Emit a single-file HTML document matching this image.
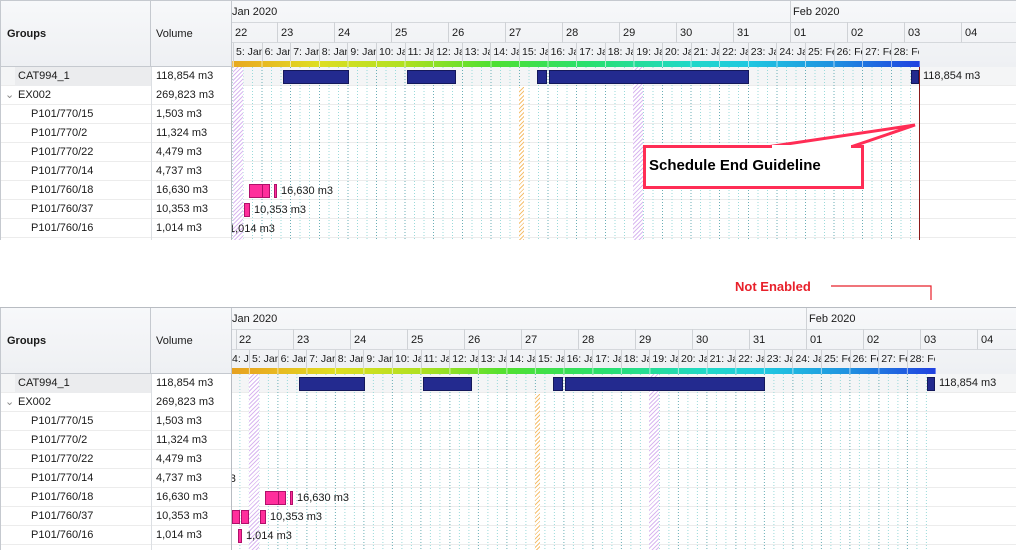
<!DOCTYPE html>
<html><head><meta charset="utf-8"><style>
*{margin:0;padding:0;box-sizing:border-box}
html,body{width:1016px;height:550px;overflow:hidden}
body{background:#fff;position:relative;font-family:"Liberation Sans",sans-serif;font-size:11px;color:#1a1a1a}
.panel{position:absolute;left:0;width:1016px;overflow:hidden}
.a{position:absolute;white-space:nowrap}
.hdr{background:linear-gradient(#f7f8fa,#eef0f3)}
.lt{border-right:1px solid #c5c9cf}
.row{position:absolute;left:0;width:1016px;height:19px;border-bottom:1px solid #ececec}
.chart{position:absolute;left:232px;width:784px;overflow:hidden}
.inner{position:absolute;left:0;top:0;width:800px;height:100%}
.day{position:absolute;top:21px;height:21px;border-left:1px solid #cfd2d6;border-bottom:1px solid #d5d8dc;padding:5px 0 0 3px;font-size:11px;overflow:hidden;white-space:nowrap}
.sub{position:absolute;top:42px;height:18px;width:28.6px;border-left:1px solid #cfd2d6;padding:3px 0 0 2px;overflow:hidden;white-space:nowrap;font-size:10.5px}
.lines{position:absolute;top:66px;left:0;height:200px;
background-image:repeating-linear-gradient(to right,#6aaeb6 0 1px,transparent 1px 28.6px),repeating-linear-gradient(to right,transparent 0 9.5px,#9adada 9.5px 10.5px,transparent 10.5px 19px,#9adada 19px 20px,transparent 20px 28.6px);background-position:1px 0,1px 0;
-webkit-mask-image:repeating-linear-gradient(to bottom,#000 0 1px,transparent 1px 3px);mask-image:repeating-linear-gradient(to bottom,#000 0 1px,transparent 1px 3px)}
.hatchp{position:absolute;top:66px;height:200px;background:repeating-linear-gradient(135deg,#d9b8f0 0 1px,#fff 1px 3px)}
.hatcho{position:absolute;top:86px;height:200px;background:repeating-linear-gradient(135deg,#f5c070 0 1px,#fff 1px 3px)}
.bar{position:absolute;background:#232a8f;border:1px solid #14185a;height:14px}
.pk{position:absolute;background:#ff2e9c;border:1px solid #b0106a;height:14px}
.lbl{position:absolute;white-space:nowrap}
</style></head><body>

<!-- TOP PANEL -->
<div class="panel" style="top:0;height:240px;border-top:1px solid #c5c9cf">
  <div class="a hdr lt" style="left:0;top:0;width:151px;height:66px;border-bottom:1px solid #c5c9cf;border-left:1px solid #c5c9cf"></div>
  <div class="a" style="left:7px;top:27px;font-weight:bold">Groups</div>
  <div class="a hdr lt" style="left:151px;top:0;width:81px;height:66px;border-bottom:1px solid #c5c9cf"></div>
  <div class="a" style="left:156px;top:27px">Volume</div>
  <div class="a hdr" style="left:232px;top:0;width:784px;height:66px"></div>
  <div class="a" style="left:232px;top:21px;width:784px;border-top:1px solid #d5d8dc"></div>

  <div class="row" style="top:66px;background:#f4f5f6"></div>
  <div class="a" style="left:15px;top:66px;width:136px;height:19px;background:#ebecee"></div>
  <div class="a" style="left:151px;top:66px;width:81px;height:19px;background:#fff"></div>
  <div class="row" style="top:85px"></div><div class="row" style="top:104px"></div><div class="row" style="top:123px"></div><div class="row" style="top:142px"></div><div class="row" style="top:161px"></div><div class="row" style="top:180px"></div><div class="row" style="top:199px"></div><div class="row" style="top:218px"></div>
  <div class="a" style="left:0;top:66px;width:1px;height:180px;background:#c5c9cf"></div>
  <div class="a" style="left:151px;top:66px;width:1px;height:180px;background:#dcdfe3"></div>
  <div class="a" style="left:231px;top:66px;width:1px;height:180px;background:#b8bcc2"></div>

  <div class="a" style="left:18px;top:69px">CAT994_1</div><div class="a" style="left:156px;top:69px">118,854 m3</div>
  <div class="a" style="left:5px;top:87px;color:#888">&#8964;</div>
  <div class="a" style="left:18px;top:88px">EX002</div><div class="a" style="left:156px;top:88px">269,823 m3</div>
  <div class="a" style="left:31px;top:107px">P101/770/15</div><div class="a" style="left:156px;top:107px">1,503 m3</div>
  <div class="a" style="left:31px;top:126px">P101/770/2</div><div class="a" style="left:156px;top:126px">11,324 m3</div>
  <div class="a" style="left:31px;top:145px">P101/770/22</div><div class="a" style="left:156px;top:145px">4,479 m3</div>
  <div class="a" style="left:31px;top:164px">P101/770/14</div><div class="a" style="left:156px;top:164px">4,737 m3</div>
  <div class="a" style="left:31px;top:183px">P101/760/18</div><div class="a" style="left:156px;top:183px">16,630 m3</div>
  <div class="a" style="left:31px;top:202px">P101/760/37</div><div class="a" style="left:156px;top:202px">10,353 m3</div>
  <div class="a" style="left:31px;top:221px">P101/760/16</div><div class="a" style="left:156px;top:221px">1,014 m3</div>

  <div class="chart" style="top:0;height:240px">
    <div class="a" style="left:0;top:5px">Jan 2020</div>
    <div class="a" style="left:558px;top:0;height:21px;border-left:1px solid #cfd2d6;padding:5px 0 0 2px">Feb 2020</div>
    <div class="inner">
      <div class="day" style="left:-12px;width:57px;padding-left:14px">22</div>
      <div class="day" style="left:45px;width:57px">23</div><div class="day" style="left:102px;width:57px">24</div><div class="day" style="left:159px;width:57px">25</div><div class="day" style="left:216px;width:57px">26</div><div class="day" style="left:273px;width:57px">27</div><div class="day" style="left:330px;width:57px">28</div><div class="day" style="left:387px;width:57px">29</div><div class="day" style="left:444px;width:57px">30</div><div class="day" style="left:501px;width:57px">31</div><div class="day" style="left:558px;width:57px">01</div><div class="day" style="left:615px;width:57px">02</div><div class="day" style="left:672px;width:57px">03</div><div class="day" style="left:729px;width:57px">04</div>
      <div class="sub" style="left:1px">5: Jan</div><div class="sub" style="left:29.6px">6: Jan</div><div class="sub" style="left:58.2px">7: Jan</div><div class="sub" style="left:86.8px">8: Jan</div><div class="sub" style="left:115.4px">9: Jan</div><div class="sub" style="left:144px">10: Jan</div><div class="sub" style="left:172.6px">11: Jan</div><div class="sub" style="left:201.2px">12: Jan</div><div class="sub" style="left:229.8px">13: Jan</div><div class="sub" style="left:258.4px">14: Jan</div><div class="sub" style="left:287px">15: Jan</div><div class="sub" style="left:315.6px">16: Jan</div><div class="sub" style="left:344.2px">17: Jan</div><div class="sub" style="left:372.8px">18: Jan</div><div class="sub" style="left:401.4px">19: Jan</div><div class="sub" style="left:430px">20: Jan</div><div class="sub" style="left:458.6px">21: Jan</div><div class="sub" style="left:487.2px">22: Jan</div><div class="sub" style="left:515.8px">23: Jan</div><div class="sub" style="left:544.4px">24: Jan</div><div class="sub" style="left:573px">25: Feb</div><div class="sub" style="left:601.6px">26: Feb</div><div class="sub" style="left:630.2px">27: Feb</div><div class="sub" style="left:658.8px">28: Feb</div>
      <div class="a" style="left:-28px;top:60px;width:716px;height:6px;background:linear-gradient(to right,#e69a20,#e8b820 8%,#dede20 16%,#b0e020 28%,#50e030 40%,#28e070 54%,#20d8c8 68%,#20c8e0 76%,#2090e0 88%,#2040e0)"></div>
      <div class="a" style="left:0;top:60px;width:688px;height:6px;background:repeating-linear-gradient(to right,rgba(255,255,255,.6) 0 1px,transparent 1px 28.6px);background-position:1px 0"></div>
      <div class="lines" style="width:687px"></div>
      <div class="hatchp" style="left:1px;width:10px"></div>
      <div class="hatcho" style="left:287px;width:5px"></div>
      <div class="hatchp" style="left:401px;width:10px"></div>
      <div class="bar" style="left:51px;top:69px;width:66px"></div>
      <div class="bar" style="left:175px;top:69px;width:49px"></div>
      <div class="bar" style="left:305px;top:69px;width:10px"></div>
      <div class="bar" style="left:317px;top:69px;width:200px"></div>
      <div class="bar" style="left:679px;top:69px;width:8px"></div>
      <div class="lbl" style="left:691px;top:69px">118,854 m3</div>
      <div class="pk" style="left:17px;top:183px;width:14px"></div><div class="pk" style="left:30px;top:183px;width:8px"></div><div class="pk" style="left:42px;top:183px;width:3px"></div>
      <div class="lbl" style="left:49px;top:184px">16,630 m3</div>
      <div class="pk" style="left:12px;top:202px;width:6px"></div>
      <div class="lbl" style="left:22px;top:203px">10,353 m3</div>
      <div class="lbl" style="left:-3px;top:222px">1,014 m3</div>
      <div class="a" style="left:687px;top:66px;width:1px;height:175px;background:#8b1a1a"></div>
    </div>
  </div>
</div>

<!-- callout -->
<svg class="a" style="left:0;top:0" width="1016" height="300">
  <rect x="644.5" y="146.5" width="218" height="41" fill="#fff" stroke="#ff2d55" stroke-width="3"/>
  <polygon points="770,146.5 915,125 852,146.5" fill="#fff" stroke="#ff2d55" stroke-width="3" stroke-linejoin="miter"/>
  <rect x="772" y="145" width="79" height="4" fill="#fff"/>
  <polyline points="831,286 931,286 931,308" fill="none" stroke="#e8202a" stroke-width="1.2"/>
</svg>
<div class="a" style="left:649px;top:157px;font-size:15px;font-weight:bold;color:#000">Schedule End Guideline</div>
<div class="a" style="left:735px;top:279px;font-size:13px;font-weight:bold;color:#e8202a">Not Enabled</div>

<!-- BOTTOM PANEL -->
<div class="panel" style="top:307px;height:243px;border-top:1px solid #b8bcc2">
  <div class="a hdr lt" style="left:0;top:0;width:151px;height:66px;border-bottom:1px solid #c5c9cf;border-left:1px solid #c5c9cf"></div>
  <div class="a" style="left:7px;top:27px;font-weight:bold">Groups</div>
  <div class="a hdr lt" style="left:151px;top:0;width:81px;height:66px;border-bottom:1px solid #c5c9cf"></div>
  <div class="a" style="left:156px;top:27px">Volume</div>
  <div class="a hdr" style="left:232px;top:0;width:784px;height:66px"></div>
  <div class="a" style="left:232px;top:21px;width:784px;border-top:1px solid #d5d8dc"></div>

  <div class="row" style="top:66px;background:#f4f5f6"></div>
  <div class="a" style="left:15px;top:66px;width:136px;height:19px;background:#ebecee"></div>
  <div class="a" style="left:151px;top:66px;width:81px;height:19px;background:#fff"></div>
  <div class="row" style="top:85px"></div><div class="row" style="top:104px"></div><div class="row" style="top:123px"></div><div class="row" style="top:142px"></div><div class="row" style="top:161px"></div><div class="row" style="top:180px"></div><div class="row" style="top:199px"></div><div class="row" style="top:218px"></div>
  <div class="a" style="left:0;top:66px;width:1px;height:180px;background:#c5c9cf"></div>
  <div class="a" style="left:151px;top:66px;width:1px;height:180px;background:#dcdfe3"></div>
  <div class="a" style="left:231px;top:66px;width:1px;height:180px;background:#b8bcc2"></div>

  <div class="a" style="left:18px;top:69px">CAT994_1</div><div class="a" style="left:156px;top:69px">118,854 m3</div>
  <div class="a" style="left:5px;top:87px;color:#888">&#8964;</div>
  <div class="a" style="left:18px;top:88px">EX002</div><div class="a" style="left:156px;top:88px">269,823 m3</div>
  <div class="a" style="left:31px;top:107px">P101/770/15</div><div class="a" style="left:156px;top:107px">1,503 m3</div>
  <div class="a" style="left:31px;top:126px">P101/770/2</div><div class="a" style="left:156px;top:126px">11,324 m3</div>
  <div class="a" style="left:31px;top:145px">P101/770/22</div><div class="a" style="left:156px;top:145px">4,479 m3</div>
  <div class="a" style="left:31px;top:164px">P101/770/14</div><div class="a" style="left:156px;top:164px">4,737 m3</div>
  <div class="a" style="left:31px;top:183px">P101/760/18</div><div class="a" style="left:156px;top:183px">16,630 m3</div>
  <div class="a" style="left:31px;top:202px">P101/760/37</div><div class="a" style="left:156px;top:202px">10,353 m3</div>
  <div class="a" style="left:31px;top:221px">P101/760/16</div><div class="a" style="left:156px;top:221px">1,014 m3</div>

  <div class="chart" style="top:0;height:243px">
    <div class="a" style="left:0;top:5px">Jan 2020</div>
    <div class="a" style="left:574px;top:0;height:21px;border-left:1px solid #cfd2d6;padding:5px 0 0 2px">Feb 2020</div>
    <div class="a" style="left:0;top:45px;font-size:10.5px">4: J</div>
    <div class="inner" style="left:16px">
      <div class="day" style="left:-69px;width:57px">21</div>
      <div class="day" style="left:-12px;width:57px;padding-left:2px">22</div>
      <div class="day" style="left:45px;width:57px">23</div><div class="day" style="left:102px;width:57px">24</div><div class="day" style="left:159px;width:57px">25</div><div class="day" style="left:216px;width:57px">26</div><div class="day" style="left:273px;width:57px">27</div><div class="day" style="left:330px;width:57px">28</div><div class="day" style="left:387px;width:57px">29</div><div class="day" style="left:444px;width:57px">30</div><div class="day" style="left:501px;width:57px">31</div><div class="day" style="left:558px;width:57px">01</div><div class="day" style="left:615px;width:57px">02</div><div class="day" style="left:672px;width:57px">03</div><div class="day" style="left:729px;width:57px">04</div>
      <div class="sub" style="left:1px">5: Jan</div><div class="sub" style="left:29.6px">6: Jan</div><div class="sub" style="left:58.2px">7: Jan</div><div class="sub" style="left:86.8px">8: Jan</div><div class="sub" style="left:115.4px">9: Jan</div><div class="sub" style="left:144px">10: Jan</div><div class="sub" style="left:172.6px">11: Jan</div><div class="sub" style="left:201.2px">12: Jan</div><div class="sub" style="left:229.8px">13: Jan</div><div class="sub" style="left:258.4px">14: Jan</div><div class="sub" style="left:287px">15: Jan</div><div class="sub" style="left:315.6px">16: Jan</div><div class="sub" style="left:344.2px">17: Jan</div><div class="sub" style="left:372.8px">18: Jan</div><div class="sub" style="left:401.4px">19: Jan</div><div class="sub" style="left:430px">20: Jan</div><div class="sub" style="left:458.6px">21: Jan</div><div class="sub" style="left:487.2px">22: Jan</div><div class="sub" style="left:515.8px">23: Jan</div><div class="sub" style="left:544.4px">24: Jan</div><div class="sub" style="left:573px">25: Feb</div><div class="sub" style="left:601.6px">26: Feb</div><div class="sub" style="left:630.2px">27: Feb</div><div class="sub" style="left:658.8px">28: Feb</div>
      <div class="a" style="left:-28px;top:60px;width:716px;height:6px;background:linear-gradient(to right,#e69a20,#e8b820 8%,#dede20 16%,#b0e020 28%,#50e030 40%,#28e070 54%,#20d8c8 68%,#20c8e0 76%,#2090e0 88%,#2040e0)"></div>
      <div class="a" style="left:-28px;top:60px;width:716px;height:6px;background:repeating-linear-gradient(to right,rgba(255,255,255,.6) 0 1px,transparent 1px 28.6px);background-position:0.4px 0"></div>
      <div class="lines" style="left:-28px;width:715px;background-position:0.4px 0,0.4px 0"></div>
      <div class="hatchp" style="left:1px;width:10px"></div>
      <div class="hatcho" style="left:287px;width:5px"></div>
      <div class="hatchp" style="left:401px;width:10px"></div>
      <div class="bar" style="left:51px;top:69px;width:66px"></div>
      <div class="bar" style="left:175px;top:69px;width:49px"></div>
      <div class="bar" style="left:305px;top:69px;width:10px"></div>
      <div class="bar" style="left:317px;top:69px;width:200px"></div>
      <div class="bar" style="left:679px;top:69px;width:8px"></div>
      <div class="lbl" style="left:691px;top:69px">118,854 m3</div>
      <div class="lbl" style="left:-58px;top:165px">4,737 m3</div>
      <div class="pk" style="left:17px;top:183px;width:14px"></div><div class="pk" style="left:30px;top:183px;width:8px"></div><div class="pk" style="left:42px;top:183px;width:3px"></div>
      <div class="lbl" style="left:49px;top:184px">16,630 m3</div>
      <div class="pk" style="left:-16px;top:202px;width:8px"></div><div class="pk" style="left:-7px;top:202px;width:8px"></div>
      <div class="pk" style="left:12px;top:202px;width:6px"></div>
      <div class="lbl" style="left:22px;top:203px">10,353 m3</div>
      <div class="pk" style="left:-10px;top:221px;width:4px"></div>
      <div class="lbl" style="left:-2px;top:222px">1,014 m3</div>
    </div>
  </div>
</div>
</body></html>
